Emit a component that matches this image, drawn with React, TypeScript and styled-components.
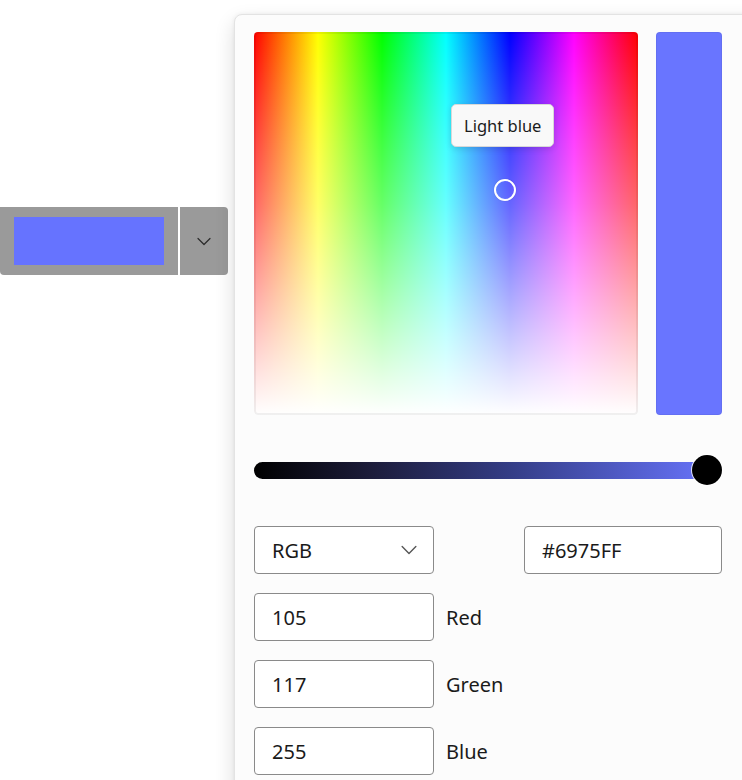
import React from "react";
import styled, { createGlobalStyle } from "styled-components";

const GlobalStyle = createGlobalStyle`
  html, body {
    margin: 0;
    padding: 0;
    background: #ffffff;
    overflow: hidden;
  }
  body {
    font-family: "Noto Sans", "Open Sans", "DejaVu Sans", sans-serif;
    color: #1a1a1a;
  }
`;

const Chevron: React.FC<{ size?: number; color?: string }> = ({ size = 14, color = "#333" }) => (
  <svg width={size} height={size / 2 + 2} viewBox="0 0 14 8" fill="none">
    <path d="M1 1l6 6 6-6" stroke={color} strokeWidth="1.2" strokeLinecap="round" strokeLinejoin="round" />
  </svg>
);

const channels = [
  { value: "105", label: "Red" },
  { value: "117", label: "Green" },
  { value: "255", label: "Blue" },
];

export default function App() {
  return (
    <>
      <GlobalStyle />
      <Page>
        <SplitButton>
          <SwatchPart>
            <Swatch />
          </SwatchPart>
          <ArrowPart>
            <Chevron size={14} color="#2a2a2a" />
          </ArrowPart>
        </SplitButton>

        <Flyout>
          <TopRow>
            <Spectrum>
              <Tooltip>Light blue</Tooltip>
              <Selector />
            </Spectrum>
            <Preview />
          </TopRow>

          <SliderRow>
            <Track />
            <Thumb />
          </SliderRow>

          <FieldsGrid>
            <ComboBox>
              <span>RGB</span>
              <Chevron size={16} color="#555" />
            </ComboBox>
            <HexBox>#6975FF</HexBox>
          </FieldsGrid>

          {channels.map((c) => (
            <ChannelRow key={c.label}>
              <TextBox>{c.value}</TextBox>
              <ChannelLabel>{c.label}</ChannelLabel>
            </ChannelRow>
          ))}
        </Flyout>
      </Page>
    </>
  );
}

const Page = styled.div`
  display: flex;
  align-items: flex-start;
  width: 742px;
  height: 780px;
  overflow: hidden;
`;

const SplitButton = styled.div`
  display: flex;
  margin-top: 207px;
  height: 68px;
  flex-shrink: 0;
`;

const SwatchPart = styled.div`
  width: 178px;
  height: 100%;
  background: #9a9a9a;
  border-radius: 0 0 0 4px;
  display: flex;
  align-items: center;
  padding-left: 14px;
  box-sizing: border-box;
`;

const Swatch = styled.div`
  width: 150px;
  height: 48px;
  background: #6673ff;
`;

const ArrowPart = styled.div`
  width: 48px;
  height: 100%;
  margin-left: 2px;
  background: #9a9a9a;
  border-radius: 0 4px 4px 0;
  display: flex;
  align-items: center;
  justify-content: center;
`;

const Flyout = styled.div`
  flex-shrink: 0;
  margin-left: 6px;
  margin-top: 14px;
  width: 540px;
  height: 800px;
  box-sizing: border-box;
  padding: 17px 0 0 19px;
  background: #fcfcfc;
  border: 1px solid #e3e3e3;
  border-radius: 8px;
  box-shadow: 0 8px 20px rgba(0, 0, 0, 0.14), 0 0 4px rgba(0, 0, 0, 0.06);
`;

const TopRow = styled.div`
  display: flex;
  gap: 18px;
  width: 468px;
`;

const Spectrum = styled.div`
  position: relative;
  width: 384px;
  height: 383px;
  border-radius: 4px;
  box-shadow: inset 0 0 0 2px rgba(0, 0, 0, 0.06);
  background:
    linear-gradient(to bottom, rgba(255, 255, 255, 0) 0%, rgba(255, 255, 255, 0.4) 45%, #ffffff 100%),
    linear-gradient(to right, #ff0000 0%, #ffff00 16.67%, #00ff00 33.33%, #00ffff 50%, #0000ff 66.67%, #ff00ff 83.33%, #ff0000 100%);
`;

const Tooltip = styled.div`
  position: absolute;
  left: 197px;
  top: 72px;
  height: 43px;
  padding: 0 12px;
  display: flex;
  align-items: center;
  box-sizing: border-box;
  font-size: 16.5px;
  color: #1b1b1b;
  background: #f9f9f9;
  border: 1px solid #d8d8d8;
  border-radius: 5px;
  box-shadow: 0 2px 6px rgba(0, 0, 0, 0.12);
  white-space: nowrap;
`;

const Selector = styled.div`
  position: absolute;
  left: 240px;
  top: 147px;
  width: 18px;
  height: 18px;
  border: 2px solid #ffffff;
  border-radius: 50%;
  box-shadow: 0 0 1px rgba(0, 0, 0, 0.3);
`;

const Preview = styled.div`
  width: 66px;
  height: 383px;
  border-radius: 4px;
  background: #6975ff;
  border: 1px solid rgba(0, 0, 0, 0.05);
  box-sizing: border-box;
`;

const SliderRow = styled.div`
  position: relative;
  width: 468px;
  height: 32px;
  margin-top: 39px;
  display: flex;
  align-items: center;
`;

const Track = styled.div`
  width: 466px;
  height: 17px;
  border-radius: 9px;
  background: linear-gradient(to right, #000000 0%, #1c1c3a 25%, #343d86 55%, #6975ff 100%);
`;

const Thumb = styled.div`
  position: absolute;
  right: 0;
  top: 1px;
  width: 30px;
  height: 30px;
  border-radius: 50%;
  background: #000000;
  box-shadow: 0 0 0 1px rgba(255, 255, 255, 0.8);
`;

const FieldsGrid = styled.div`
  display: flex;
  justify-content: space-between;
  width: 468px;
  margin-top: 40px;
`;

const FieldBase = styled.div`
  height: 48px;
  box-sizing: border-box;
  border: 1px solid #8a8a8a;
  border-radius: 4px;
  background: #ffffff;
  display: flex;
  align-items: center;
  padding: 0 17px;
  font-size: 20px;
  color: #1a1a1a;
`;

const ComboBox = styled(FieldBase)`
  width: 180px;
  justify-content: space-between;
  padding-right: 16px;
`;

const HexBox = styled(FieldBase)`
  width: 198px;
`;

const ChannelRow = styled.div`
  display: flex;
  align-items: center;
  gap: 12px;
  margin-top: 19px;
`;

const TextBox = styled(FieldBase)`
  width: 180px;
`;

const ChannelLabel = styled.span`
  font-size: 20px;
  color: #1a1a1a;
`;
